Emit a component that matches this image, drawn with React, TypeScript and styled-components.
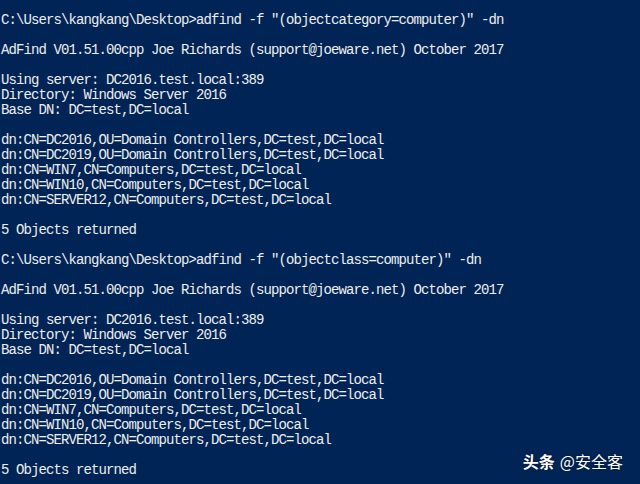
import React from "react";
import styled, { createGlobalStyle } from "styled-components";

const GlobalStyle = createGlobalStyle`
  html, body {
    margin: 0;
    padding: 0;
    background: #012456;
  }
  #root {
    width: 640px;
    height: 484px;
  }
`;

const Console = styled.div`
  position: relative;
  width: 640px;
  height: 484px;
  box-sizing: border-box;
  padding: 13px 0 0 1px;
  background: #012456;
  overflow: hidden;
`;

const Line = styled.div`
  height: 15px;
  line-height: 15px;
  font-family: "Liberation Mono", "Courier New", monospace;
  font-size: 14px;
  letter-spacing: -0.9px;
  color: #eeeeee;
  white-space: pre;
`;

const Watermark = styled.div`
  position: absolute;
  right: 17px;
  bottom: 13px;
  display: flex;
  align-items: center;
  gap: 5px;
  font-family: "Noto Sans CJK SC", sans-serif;
  font-size: 16px;
  line-height: 20px;
  color: #ffffff;
  text-shadow: 0 0 2px rgba(0, 0, 0, 0.6);
`;

const Brand = styled.span<{ $bold?: boolean }>`
  font-weight: ${(p) => (p.$bold ? 700 : 400)};
`;

const block = (filter: string): string[] => [
  `C:\\Users\\kangkang\\Desktop>adfind -f "(${filter}=computer)" -dn`,
  "",
  "AdFind V01.51.00cpp Joe Richards (support@joeware.net) October 2017",
  "",
  "Using server: DC2016.test.local:389",
  "Directory: Windows Server 2016",
  "Base DN: DC=test,DC=local",
  "",
  "dn:CN=DC2016,OU=Domain Controllers,DC=test,DC=local",
  "dn:CN=DC2019,OU=Domain Controllers,DC=test,DC=local",
  "dn:CN=WIN7,CN=Computers,DC=test,DC=local",
  "dn:CN=WIN10,CN=Computers,DC=test,DC=local",
  "dn:CN=SERVER12,CN=Computers,DC=test,DC=local",
  "",
  "5 Objects returned",
  "",
];

const lines = [...block("objectcategory"), ...block("objectclass")];

export default function App() {
  return (
    <>
      <GlobalStyle />
      <Console>
        {lines.map((l, i) => (
          <Line key={i}>{l}</Line>
        ))}
        <Watermark>
          <Brand $bold>头条</Brand>
          <Brand>@安全客</Brand>
        </Watermark>
      </Console>
    </>
  );
}
